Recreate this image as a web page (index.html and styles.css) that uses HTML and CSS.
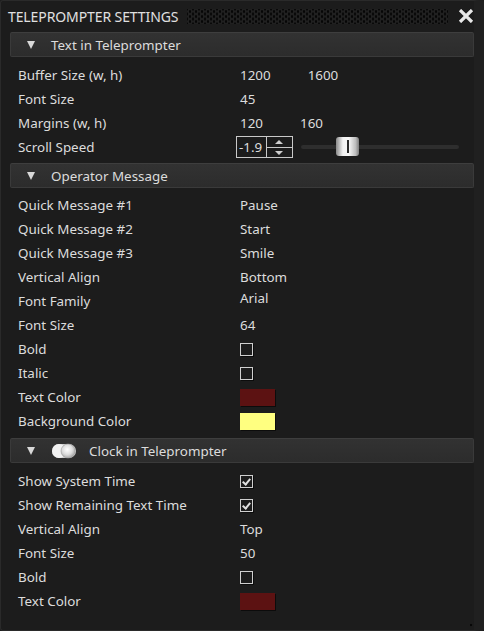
FILE: index.html
```html
<!DOCTYPE html>
<html>
<head>
<meta charset="utf-8">
<title>Teleprompter Settings</title>
<link rel="stylesheet" href="styles.css">
</head>
<body>
<div class="panel">
  <div class="titlebar">
    <span class="title">TELEPROMPTER SETTINGS</span>
    <span class="grip"></span>
    <svg class="close" width="16" height="14" viewBox="0 0 16 14"><path d="M2 1 L14 13 M14 1 L2 13" stroke="#e8e8e8" stroke-width="3.2" stroke-linecap="butt"/></svg>
  </div>

  <div class="section-head first"><span class="tri"></span><span>Text in Teleprompter</span></div>
  <div class="rows text-rows">
    <div class="row"><span class="label">Buffer Size (w, h)</span><span class="val"><span class="pair">1200</span><span>1600</span></span></div>
    <div class="row"><span class="label">Font Size</span><span class="val">45</span></div>
    <div class="row"><span class="label">Margins (w, h)</span><span class="val"><span class="pair">120</span><span>160</span></span></div>
    <div class="row"><span class="label">Scroll Speed</span>
      <span class="val speed">
        <span class="spin"><span class="spin-num">-1.9</span><span class="spin-btns"><span class="up"></span><span class="down"></span></span></span>
        <span class="slider"><span class="thumb"></span></span>
      </span>
    </div>
  </div>

  <div class="section-head"><span class="tri"></span><span>Operator Message</span></div>
  <div class="rows operator-rows">
    <div class="row"><span class="label">Quick Message #1</span><span class="val">Pause</span></div>
    <div class="row"><span class="label">Quick Message #2</span><span class="val">Start</span></div>
    <div class="row"><span class="label">Quick Message #3</span><span class="val">Smile</span></div>
    <div class="row"><span class="label">Vertical Align</span><span class="val">Bottom</span></div>
    <div class="row"><span class="label">Font Family</span><span class="val raised">Arial</span></div>
    <div class="row"><span class="label">Font Size</span><span class="val">64</span></div>
    <div class="row"><span class="label">Bold</span><span class="val"><span class="check"></span></span></div>
    <div class="row"><span class="label">Italic</span><span class="val"><span class="check"></span></span></div>
    <div class="row"><span class="label">Text Color</span><span class="val"><span class="swatch red"></span></span></div>
    <div class="row"><span class="label">Background Color</span><span class="val"><span class="swatch yellow"></span></span></div>
  </div>

  <div class="section-head"><span class="tri"></span>
    <svg class="toggle" width="26" height="16" viewBox="0 0 26 16">
      <defs>
        <radialGradient id="knob" cx="0.45" cy="0.4" r="0.6">
          <stop offset="0" stop-color="#ffffff"/>
          <stop offset="0.6" stop-color="#dcdcdc"/>
          <stop offset="1" stop-color="#a8a8a8"/>
        </radialGradient>
      </defs>
      <rect x="1" y="1" width="24" height="14" rx="7" fill="#cfcfcf"/>
      <circle cx="8" cy="8" r="7" fill="#f2f2f2"/>
      <circle cx="17" cy="8" r="7" fill="url(#knob)" stroke="#9a9a9a" stroke-width="0.6"/>
    </svg>
    <span>Clock in Teleprompter</span></div>
  <div class="rows clock-rows">
    <div class="row"><span class="label">Show System Time</span><span class="val"><span class="check on"></span></span></div>
    <div class="row"><span class="label">Show Remaining Text Time</span><span class="val"><span class="check on"></span></span></div>
    <div class="row"><span class="label">Vertical Align</span><span class="val">Top</span></div>
    <div class="row"><span class="label">Font Size</span><span class="val">50</span></div>
    <div class="row"><span class="label">Bold</span><span class="val"><span class="check"></span></span></div>
    <div class="row"><span class="label">Text Color</span><span class="val"><span class="swatch red"></span></span></div>
  </div>

  <span class="resize"></span>
</div>
</body>
</html>
```
FILE: styles.css
```css
html, body {
  margin: 0;
  padding: 0;
  background: #1c1c1c;
}

body {
  font-family: "Noto Sans", "Open Sans", sans-serif;
  font-size: 13.4px;
  color: #dcdcdc;
}

.panel {
  position: relative;
  width: 484px;
  height: 631px;
  box-sizing: border-box;
  background: #1c1c1c;
  border: 1px solid #2a2a2a;
  border-right: 10px solid #202020;
  border-radius: 3px;
  padding: 0 0 0 9px;
  overflow: hidden;
}

.titlebar {
  display: flex;
  align-items: center;
  height: 30px;
}

.title {
  font-size: 14px;
  color: #e0e0e0;
  letter-spacing: -0.1px;
  margin-left: -2px;
}

/* drag handle: staggered dark dots */
.grip {
  flex: 1;
  height: 15px;
  margin: 0 10px 0 9px;
  background-color: #202020;
  background-image:
    radial-gradient(circle, #060606 1px, transparent 1.5px),
    radial-gradient(circle, #060606 1px, transparent 1.5px);
  background-size: 6px 5px;
  background-position: 0 0, 3px 2.5px;
}

.close {
  display: block;
}

.section-head {
  display: flex;
  align-items: center;
  height: 25px;
  box-sizing: border-box;
  background: linear-gradient(#323232, #2c2c2c);
  border: 1px solid #3a3a3a;
  border-top-color: #3e3e3e;
  border-radius: 2px;
  color: #dcdcdc;
}

.section-head.first {
  margin-top: 1px;
}

.tri {
  width: 0;
  height: 0;
  border-left: 4px solid transparent;
  border-right: 4px solid transparent;
  border-top: 8px solid #d8d8d8;
  margin: 0 16px;
}

.toggle {
  display: block;
  margin-right: 12px;
}

.rows {
  padding-left: 8px;
}

.text-rows {
  padding-top: 6px;
  padding-bottom: 4px;
}

.operator-rows {
  padding-top: 5px;
  padding-bottom: 5px;
}

.clock-rows {
  padding-top: 6px;
}

.row {
  display: flex;
  align-items: center;
  height: 24px;
}

.label {
  width: 222px;
  flex: none;
}

.val {
  display: flex;
  align-items: center;
}

.val.raised {
  position: relative;
  top: -3px;
}

.pair {
  margin-right: 37px;
}

.speed {
  margin-left: -4px;
}

.spin {
  display: flex;
  height: 22px;
  box-sizing: border-box;
  border: 1px solid #c9c9c9;
}

.spin-num {
  width: 30px;
  box-sizing: border-box;
  border-right: 1px solid #c9c9c9;
  padding-left: 2px;
  line-height: 20px;
}

.spin-btns {
  display: flex;
  flex-direction: column;
  width: 25px;
}

.spin-btns span {
  flex: 1;
  position: relative;
}

.spin-btns .up {
  border-bottom: 1px solid #c9c9c9;
}

.spin-btns .up::after,
.spin-btns .down::after {
  content: "";
  position: absolute;
  left: 8px;
  top: 3px;
  border-left: 4px solid transparent;
  border-right: 4px solid transparent;
}

.spin-btns .up::after {
  border-bottom: 4px solid #cfcfcf;
}

.spin-btns .down::after {
  border-top: 4px solid #cfcfcf;
}

.slider {
  position: relative;
  width: 158px;
  height: 4px;
  margin-left: 8px;
  background: #2e2e2e;
  border-radius: 2px;
}

.thumb {
  position: absolute;
  left: 35px;
  top: -8px;
  width: 23px;
  height: 19px;
  border-radius: 3px;
  background: linear-gradient(90deg, #8a8a8a 0%, #f2f2f2 30%, #f8f8f8 55%, #bdbdbd 85%, #7e7e7e 100%);
}

.thumb::after {
  content: "";
  position: absolute;
  left: 11px;
  top: 3px;
  width: 2px;
  height: 13px;
  background: #2a2a2a;
}

.check {
  display: block;
  width: 13px;
  height: 13px;
  box-sizing: border-box;
  border: 1px solid #cfcfcf;
  box-shadow: 1px 1px 0 #0c0c0c;
  position: relative;
}

.check.on::after {
  content: "";
  position: absolute;
  left: 3px;
  top: 1px;
  width: 3px;
  height: 6px;
  border-right: 2px solid #e0e0e0;
  border-bottom: 2px solid #e0e0e0;
  transform: rotate(40deg);
}

.swatch {
  display: block;
  width: 35px;
  height: 17px;
  box-shadow: 1px 1px 0 #0c0c0c;
}

.swatch.red {
  background: #5c1212;
}

.swatch.yellow {
  background: #ffff80;
}

.resize {
  position: absolute;
  right: -8px;
  bottom: 2px;
  width: 12px;
  height: 12px;
  background:
    radial-gradient(circle at 9px 2px, #070707 1.3px, transparent 1.6px),
    radial-gradient(circle at 5px 6px, #070707 1.3px, transparent 1.6px),
    radial-gradient(circle at 9px 9px, #070707 1.3px, transparent 1.6px),
    radial-gradient(circle at 1px 9px, #070707 1.3px, transparent 1.6px);
}
```
